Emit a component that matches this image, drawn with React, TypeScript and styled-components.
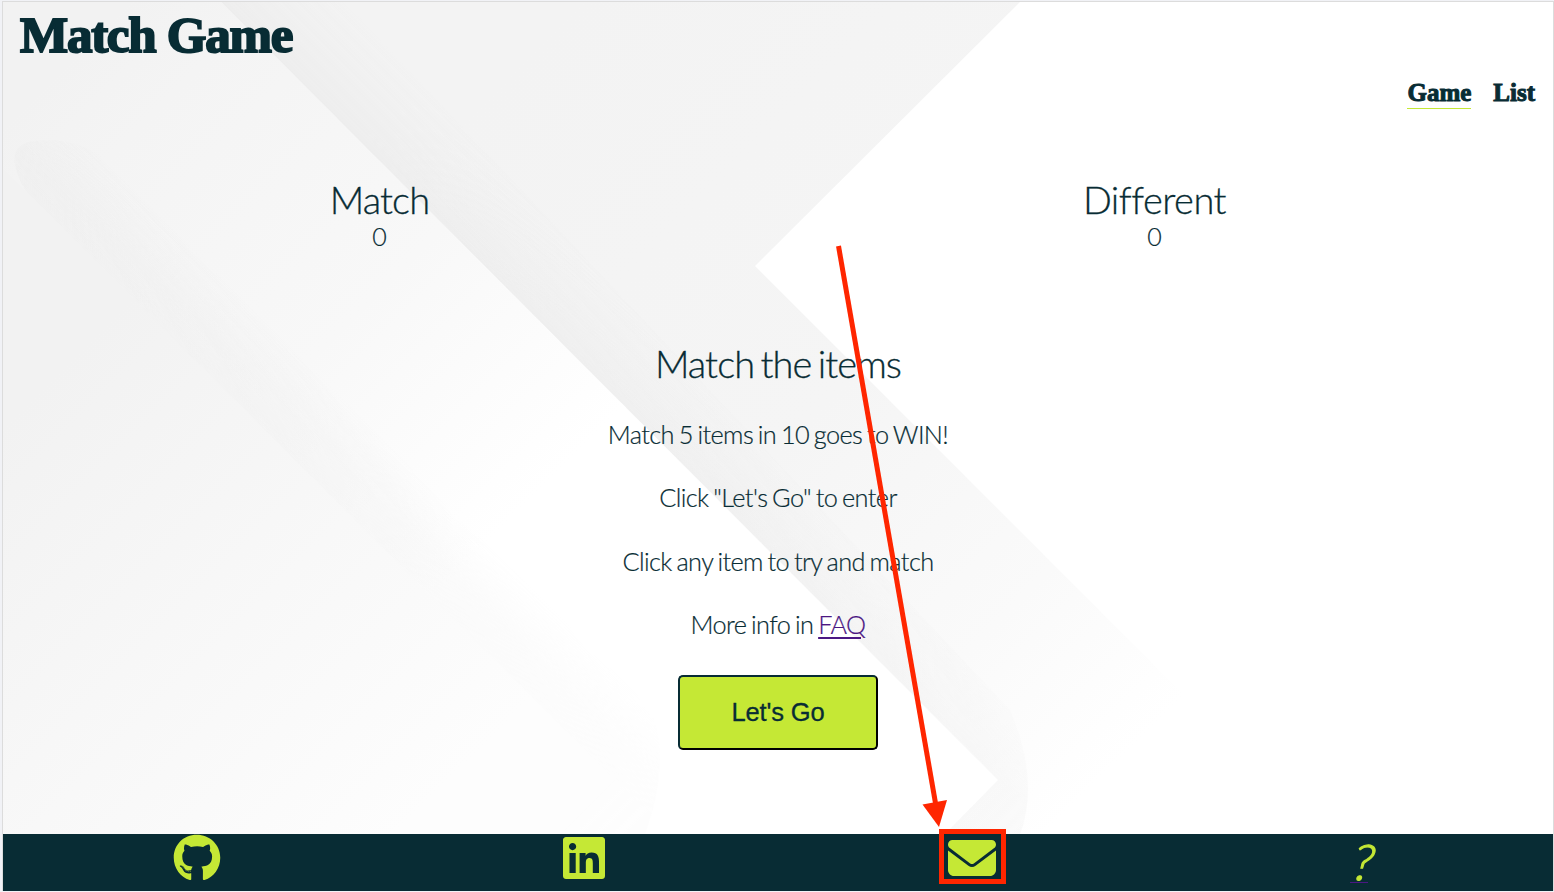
import React from 'react';
import styled, { createGlobalStyle } from 'styled-components';
import { FaGithub, FaLinkedin, FaEnvelope } from 'react-icons/fa6';

const ink = '#082c34';
const lime = '#c5e835';

const GlobalStyle = createGlobalStyle`
  * { box-sizing: border-box; }
  body { margin: 0; background: #f0f0f0; font-family: Lato, sans-serif; font-weight: 300; color: ${ink}; overflow: hidden; }
  p, h1, h2 { margin: 0; }
`;

const Frame = styled.div`
  height: 892px;
  padding: 1px 0 1px 2px;
  background: #f1f2f6;
`;

const Page = styled.div`
  position: relative;
  height: 890px;
  width: 1552px;
  display: flex;
  flex-direction: column;
  border: solid #dcdcdc;
  border-width: 1px 1px 0 1px;
  background: #fff;
`;

const Backdrop = styled.svg`
  position: absolute;
  left: -3px;
  top: -2px;
`;

const Header = styled.header`
  position: relative;
  height: 132px;
  display: flex;
  flex-direction: column;
  justify-content: space-between;
  padding: 3px 18px 25px 17px;
  font-family: 'Liberation Serif', serif;
  font-weight: 700;
`;

const Title = styled.h1`
  height: 60px;
  font-size: 51px;
  line-height: 61px;
  letter-spacing: -1.25px;
  white-space: nowrap;
  -webkit-text-stroke: 2px ${ink};
`;

const Nav = styled.nav`
  display: flex;
  justify-content: flex-end;
  gap: 22px;
  font-size: 25px;
`;

const NavLink = styled.a<{ $active?: boolean }>`
  height: 32px;
  line-height: 32px;
  box-shadow: ${p => (p.$active ? `inset 0 -1px ${lime}` : 'none')};
  -webkit-text-stroke: 1px ${ink};
`;

const Scores = styled.section`
  position: relative;
  display: flex;
  height: 203px;
  padding-top: 42px;
`;

const Score = styled.div`
  flex: 1;
  padding-right: 22px;
  text-align: center;
`;

const Heading = styled.h2<{ $tracking?: number }>`
  font-size: 38px;
  line-height: 46px;
  font-weight: 300;
  letter-spacing: ${p => p.$tracking ?? -0.9}px;
  word-spacing: -3.2px;
  -webkit-text-stroke: 0.3px ${ink};
`;

const Count = styled.p`
  font-size: 25px;
  line-height: 28px;
  -webkit-text-stroke: 0.2px ${ink};
`;

const Intro = styled.main`
  position: relative;
  flex: 1;
  display: flex;
  flex-direction: column;
  align-items: center;
  padding-top: 3px;
`;

const Instructions = styled.div`
  display: grid;
  gap: 32.4px;
  padding-top: 33px;
  text-align: center;
`;

const Line = styled.p`
  font-size: 25.3px;
  line-height: 31px;
  letter-spacing: -0.6px;
  word-spacing: -1.5px;
  -webkit-text-stroke: 0.2px;
`;

const Faq = styled.a`
  color: #4b1783;
  text-decoration: underline;
  text-decoration-thickness: 2px;
  text-underline-offset: 3px;
`;

const Start = styled.button`
  width: 200px;
  height: 75px;
  margin-top: 35px;
  border: 2px solid;
  border-color: ${ink} #000 #000 ${ink};
  border-radius: 5px;
  background: ${lime};
  color: ${ink};
  font: 25.5px 'Liberation Sans', sans-serif;
  letter-spacing: -0.15px;
  -webkit-text-stroke: 0.3px ${ink};
`;

const Footer = styled.footer`
  position: relative;
  height: 57px;
  display: grid;
  grid-template-columns: repeat(4, 1fr);
  justify-items: center;
  background: ${ink};
  color: ${lime};
`;

const Social = styled.a`
  height: 48px;
  display: flex;
  align-items: center;
`;

const Help = styled.a`
  width: 18px;
  height: 49px;
  display: flex;
  justify-content: center;
  border-bottom: 1px solid #4b1783;
`;

const HelpMark = styled.span`
  font-size: 49px;
  line-height: 55px;
  transform: skewX(-14deg);
  transform-origin: 50% 47px;
  -webkit-text-stroke: 1.2px ${lime};
`;

const Annotation = styled.svg`
  position: absolute;
  left: -3px;
  top: -2px;
  pointer-events: none;
`;

const Wallpaper = () => (
  <Backdrop width="1553" height="835" viewBox="0 0 1553 835">
    <defs>
      <linearGradient id="left" gradientUnits="userSpaceOnUse" x1="0" y1="430" x2="400" y2="830">
        <stop offset="0" stopColor="#f2f2f2" /><stop offset="1" stopColor="#fdfdfd" />
      </linearGradient>
      <linearGradient id="mid" gradientUnits="userSpaceOnUse" x1="40" y1="90" x2="490" y2="540">
        <stop offset="0" stopColor="#f2f2f2" /><stop offset=".15" stopColor="#f4f4f4" /><stop offset=".6" stopColor="#f8f8f8" /><stop offset="1" stopColor="#fff" />
      </linearGradient>
      <linearGradient id="midShade" gradientUnits="userSpaceOnUse" x1="200" y1="365" x2="255" y2="310">
        <stop offset="0" stopColor="#eee" stopOpacity=".7" /><stop offset=".4" stopColor="#eee" stopOpacity=".6" /><stop offset="1" stopColor="#eee" stopOpacity="0" />
      </linearGradient>
      <linearGradient id="right" gradientUnits="userSpaceOnUse" x1="480" y1="100" x2="1130" y2="750">
        <stop offset="0" stopColor="#f3f3f3" /><stop offset=".5" stopColor="#f5f5f5" /><stop offset=".8" stopColor="#fafafa" /><stop offset="1" stopColor="#fff" />
      </linearGradient>
      <linearGradient id="rightShade" gradientUnits="userSpaceOnUse" x1="500" y1="281" x2="562" y2="219">
        <stop offset="0" stopColor="#eaeaea" stopOpacity=".6" /><stop offset="1" stopColor="#eee" stopOpacity="0" />
      </linearGradient>
      <linearGradient id="fade" gradientUnits="userSpaceOnUse" x1="100" y1="0" x2="780" y2="680">
        <stop offset="0" stopColor="#fff" /><stop offset="1" stopColor="#222" />
      </linearGradient>
      <linearGradient id="fadeRight" gradientUnits="userSpaceOnUse" x1="300" y1="200" x2="1000" y2="900">
        <stop offset="0" stopColor="#fff" /><stop offset="1" stopColor="#555" />
      </linearGradient>
      <mask id="fadeMask"><rect width="1553" height="835" fill="url(#fade)" /></mask>
      <mask id="fadeRightMask"><rect width="1553" height="835" fill="url(#fadeRight)" /></mask>
    </defs>
    <path d="M3 2H221L998 780L944 835H3Z" fill="url(#mid)" />
    <path d="M3 168L615 780L560 835H3Z" fill="url(#left)" />
    <path d="M25 190Q0 145 35 141Q75 137 103 158L645 700Q675 750 645 835H560L615 780Z" fill="url(#midShade)" mask="url(#fadeMask)" />
    <path d="M221 2H1020L755 266L1260 771L1196 835H944L998 780Z" fill="url(#right)" />
    <path d="M221 2L998 780L944 835H1020Q1040 780 1010 710L345 2Z" fill="url(#rightShade)" mask="url(#fadeRightMask)" />
  </Backdrop>
);

export default function App() {
  return (
    <>
      <GlobalStyle />
      <Frame>
        <Page>
          <Wallpaper />
          <Header>
            <Title>Match Game</Title>
            <Nav>
              <NavLink $active>Game</NavLink>
              <NavLink>List</NavLink>
            </Nav>
          </Header>
          <Scores>
            <Score><Heading>Match</Heading><Count>0</Count></Score>
            <Score><Heading $tracking={-0.5}>Different</Heading><Count>0</Count></Score>
          </Scores>
          <Intro>
            <Heading>Match the items</Heading>
            <Instructions>
              <Line>Match 5 items in 10 goes to WIN!</Line>
              <Line>Click "Let's Go" to enter</Line>
              <Line>Click any item to try and match</Line>
              <Line>More info in <Faq>FAQ</Faq></Line>
            </Instructions>
            <Start>Let's Go</Start>
          </Intro>
          <Footer>
            <Social><FaGithub size={48} /></Social>
            <Social><FaLinkedin size={48} /></Social>
            <Social><FaEnvelope size={48} /></Social>
            <Help><HelpMark>?</HelpMark></Help>
          </Footer>
          <Annotation width="1554" height="892">
            <path d="M838.5 246L936 806" stroke="#ff2600" strokeWidth="5" />
            <path d="M922.5 804.5L947 800L939 827Z" fill="#ff2600" />
            <rect x="941.5" y="831.5" width="62" height="50" fill="none" stroke="#ff2600" strokeWidth="5" />
          </Annotation>
        </Page>
      </Frame>
    </>
  );
}
